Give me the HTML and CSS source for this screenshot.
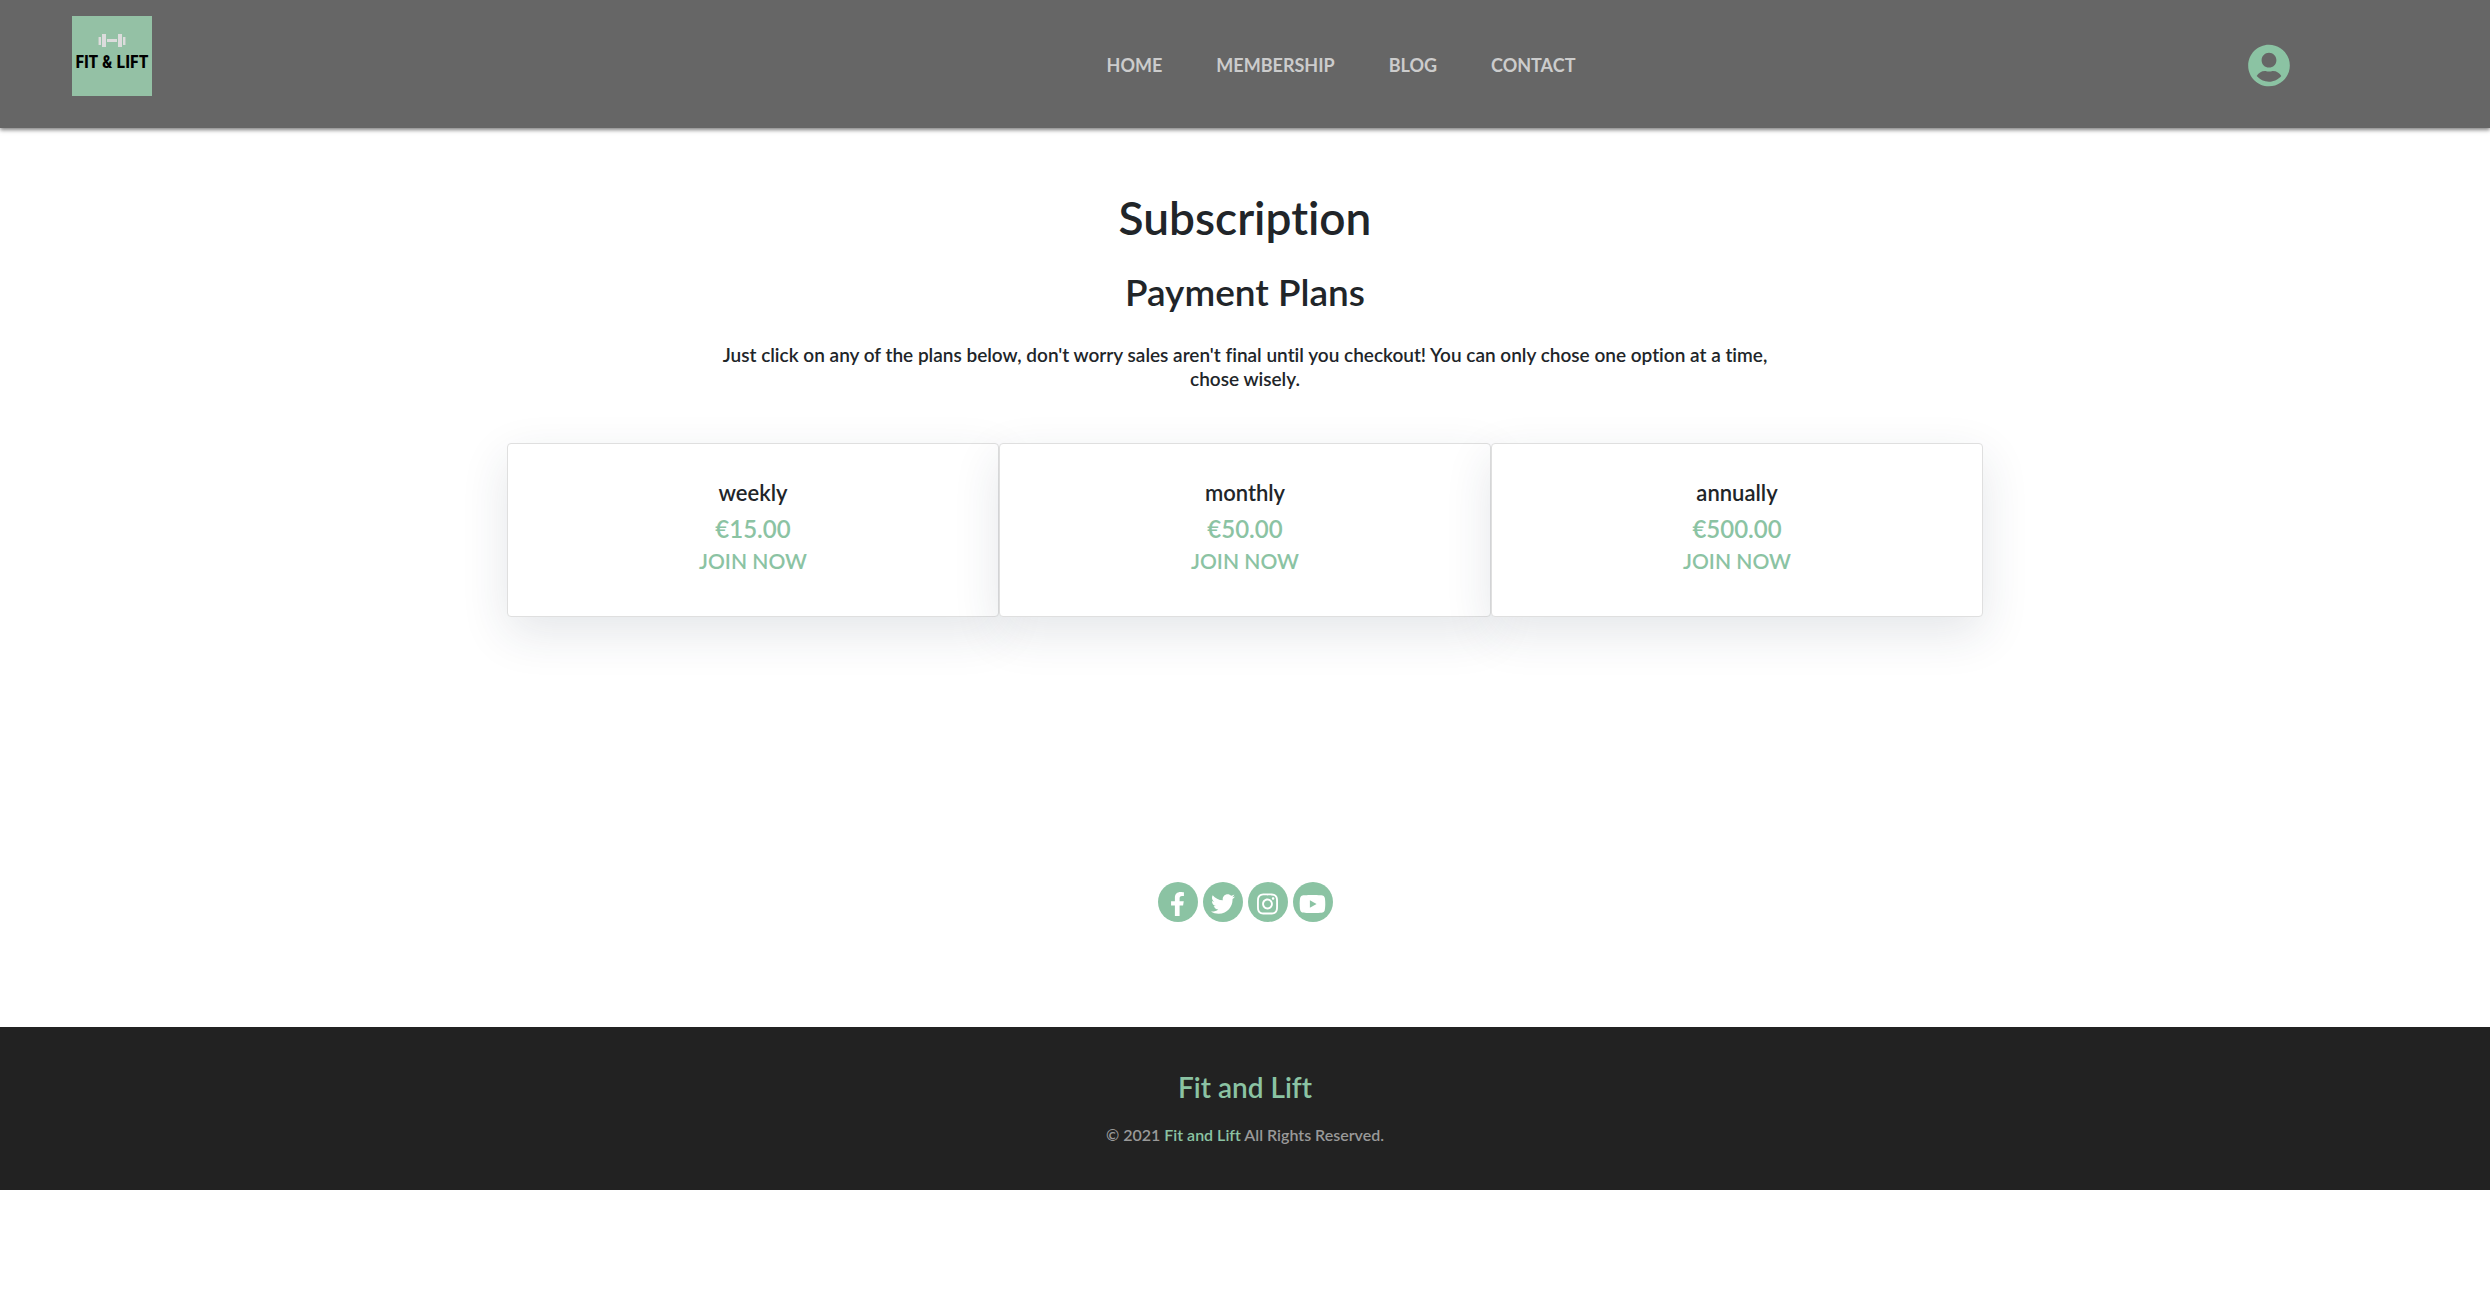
FILE: index.html
```
<!DOCTYPE html>
<html lang="en">
<head>
  <meta charset="utf-8">
  <meta name="viewport" content="width=device-width, initial-scale=1">
  <title>Fit and Lift - Subscription</title>
  <link rel="stylesheet" href="styles.css">
</head>
<body>
  <header class="site-header">
    <a class="logo" href="#">
      <svg class="logo-mark" viewBox="0 0 28 14" aria-hidden="true">
        <path fill="#b5cbbd" d="M0 3h3v8H0zM25 3h3v8h-3z"/>
        <path fill="#dcdcdc" d="M1 3h2v8H1zM25 3h2v8h-2zM4 0h4v13H4zM20 0h4v13h-4zM9 5h10v3H9z"/>
      </svg>
      <span class="logo-text">FIT &amp; LIFT</span>
    </a>
    <nav class="main-nav" aria-label="Main">
      <a href="#">HOME</a>
      <a href="#">MEMBERSHIP</a>
      <a href="#">BLOG</a>
      <a href="#">CONTACT</a>
    </nav>
    <a class="account" href="#" aria-label="Account">
      <svg viewBox="0 0 496 512" aria-hidden="true"><path d="M248 8C111 8 0 119 0 256s111 248 248 248 248-111 248-248S385 8 248 8zm0 96c48.6 0 88 39.4 88 88s-39.4 88-88 88-88-39.4-88-88 39.4-88 88-88zm0 344c-58.7 0-111.3-26.6-146.5-68.2 18.8-35.4 55.6-59.8 98.5-59.8 2.4 0 4.8.4 7.1 1.1 13 4.2 26.6 6.9 40.9 6.9 14.3 0 28-2.7 40.9-6.9 2.3-.7 4.7-1.1 7.1-1.1 42.9 0 79.7 24.4 98.5 59.8C359.3 421.4 306.7 448 248 448z"/></svg>
    </a>
  </header>

  <main class="subscription">
    <h1>Subscription</h1>
    <h2>Payment Plans</h2>
    <p class="intro">Just click on any of the plans below, don't worry sales aren't final until you checkout! You can only chose one option at a time, chose wisely.</p>
    <div class="plans">
      <section class="plan">
        <h3>weekly</h3>
        <p class="price">€15.00</p>
        <a class="join" href="#">JOIN NOW</a>
      </section>
      <section class="plan">
        <h3>monthly</h3>
        <p class="price">€50.00</p>
        <a class="join" href="#">JOIN NOW</a>
      </section>
      <section class="plan">
        <h3>annually</h3>
        <p class="price">€500.00</p>
        <a class="join" href="#">JOIN NOW</a>
      </section>
    </div>
  </main>

  <div class="social">
    <a href="#" aria-label="Facebook"><svg viewBox="0 0 320 512" aria-hidden="true"><path d="M279.14 288l14.22-92.66h-88.91v-60.13c0-25.35 12.42-50.06 52.24-50.06h40.42V6.26S260.43 0 225.36 0c-73.22 0-121.08 44.38-121.08 124.72v70.62H22.89V288h81.39v224h100.17V288z"/></svg></a>
    <a href="#" aria-label="Twitter"><svg viewBox="0 0 512 512" aria-hidden="true"><path d="M459.37 151.716c.325 4.548.325 9.097.325 13.645 0 138.72-105.583 298.558-298.558 298.558-59.452 0-114.68-17.219-161.137-47.106 8.447.974 16.568 1.299 25.34 1.299 49.055 0 94.213-16.568 130.274-44.832-46.132-.975-84.792-31.188-98.112-72.772 6.498.974 12.995 1.624 19.818 1.624 9.421 0 18.843-1.3 27.614-3.573-48.081-9.747-84.143-51.98-84.143-102.985v-1.299c13.969 7.797 30.214 12.67 47.431 13.319-28.264-18.843-46.781-51.005-46.781-87.391 0-19.492 5.197-37.36 14.294-52.954 51.655 63.675 129.3 105.258 216.365 109.807-1.624-7.797-2.599-15.918-2.599-24.04 0-57.828 46.782-104.934 104.934-104.934 30.213 0 57.502 12.67 76.67 33.137 23.715-4.548 46.456-13.32 66.599-25.34-7.798 24.366-24.366 44.833-46.132 57.827 21.117-2.273 41.584-8.122 60.426-16.243-14.292 20.791-32.161 39.308-52.628 54.253z"/></svg></a>
    <a href="#" aria-label="Instagram"><svg viewBox="0 0 448 512" aria-hidden="true"><path d="M224.1 141c-63.6 0-114.9 51.3-114.9 114.9s51.3 114.9 114.9 114.9S339 319.5 339 255.9 287.7 141 224.1 141zm0 189.6c-41.1 0-74.7-33.5-74.7-74.7s33.5-74.7 74.7-74.7 74.7 33.5 74.7 74.7-33.6 74.7-74.7 74.7zm146.4-194.3c0 14.9-12 26.8-26.8 26.8-14.9 0-26.8-12-26.8-26.8s12-26.8 26.8-26.8 26.8 12 26.8 26.8zm76.1 27.2c-1.7-35.9-9.9-67.7-36.2-93.9-26.2-26.2-58-34.4-93.9-36.2-37-2.1-147.9-2.1-184.9 0-35.8 1.7-67.6 9.9-93.9 36.1s-34.4 58-36.2 93.9c-2.1 37-2.1 147.9 0 184.9 1.7 35.9 9.9 67.7 36.2 93.9s58 34.4 93.9 36.2c37 2.1 147.9 2.1 184.9 0 35.9-1.7 67.7-9.9 93.9-36.2 26.2-26.2 34.4-58 36.2-93.9 2.1-37 2.1-147.8 0-184.8zM398.8 388c-7.8 19.6-22.9 34.7-42.6 42.6-29.5 11.7-99.5 9-132.1 9s-102.7 2.6-132.1-9c-19.6-7.8-34.7-22.9-42.6-42.6-11.7-29.5-9-99.5-9-132.1s-2.6-102.7 9-132.1c7.8-19.6 22.9-34.7 42.6-42.6 29.5-11.7 99.5-9 132.1-9s102.7-2.6 132.1 9c19.6 7.8 34.7 22.9 42.6 42.6 11.7 29.5 9 99.5 9 132.1s2.7 102.7-9 132.1z"/></svg></a>
    <a href="#" aria-label="YouTube"><svg viewBox="0 0 576 512" aria-hidden="true"><path d="M549.655 124.083c-6.281-23.65-24.787-42.276-48.284-48.597C458.781 64 288 64 288 64S117.22 64 74.629 75.486c-23.497 6.322-42.003 24.947-48.284 48.597-11.412 42.867-11.412 132.305-11.412 132.305s0 89.438 11.412 132.305c6.281 23.65 24.787 41.5 48.284 47.821C117.22 448 288 448 288 448s170.78 0 213.371-11.486c23.497-6.321 42.003-24.171 48.284-47.821 11.412-42.867 11.412-132.305 11.412-132.305s0-89.438-11.412-132.305zm-317.51 213.508V175.185l142.739 81.205-142.739 81.201z"/></svg></a>
  </div>

  <footer class="site-footer">
    <h2>Fit and Lift</h2>
    <p>© 2021 <a href="#">Fit and Lift</a> All Rights Reserved.</p>
  </footer>
</body>
</html>
```
FILE: styles.css
```
* {
  box-sizing: border-box;
}

body {
  margin: 0;
  background: #fff;
  color: #212529;
  font-family: Lato, "Noto Sans", sans-serif;
  font-weight: 600;
  font-variant-ligatures: no-common-ligatures;
}

h1, h2, h3, p {
  margin: 0;
  font-weight: 600;
}

a {
  color: #8bc3a3;
  text-decoration: none;
}

/* Header */
.site-header {
  display: flex;
  align-items: center;
  padding: 16px 200px 32px 72px;
  background: #666;
  box-shadow: 0 2px 4px rgba(0, 0, 0, 0.5);
}

.logo {
  display: flex;
  flex-direction: column;
  align-items: center;
  width: 80px;
  height: 80px;
  padding-top: 18px;
  background: #94c1a5;
  color: #000;
}

.logo-mark {
  width: 28px;
  height: 14px;
}

.logo-text {
  font: 700 18px/28px "Liberation Sans Narrow", "Roboto Condensed", Roboto, sans-serif;
  white-space: nowrap;
}

.main-nav {
  display: flex;
  flex: 1;
  justify-content: center;
  gap: 54px;
  margin-left: 282px;
  padding-top: 18px;
}

.main-nav a {
  color: #ccc;
  font-size: 18px;
  font-weight: 700;
  line-height: 24px;
}

.account {
  padding-top: 18px;
}

.account svg {
  display: block;
  width: 42px;
  height: 43px;
  fill: #8bc3a3;
}

/* Plans */
.subscription {
  padding: 62px 16px 0;
  text-align: center;
}

.subscription h1 {
  font-size: 46px;
  line-height: 56px;
}

.subscription h2 {
  margin-top: 24px;
  font-size: 37px;
  line-height: 44px;
}

.intro {
  max-width: 1080px;
  margin: 29px auto 0;
  font-size: 19px;
  line-height: 24px;
}

.plans {
  display: grid;
  grid-template-columns: repeat(3, 1fr);
  max-width: 1476px;
  margin: 52px auto 0;
}

.plan {
  padding: 33px 16px 39px;
  border: 1px solid #dfdfdf;
  border-radius: 4px;
  background: #fff;
  box-shadow: 0 16px 48px rgba(33, 47, 72, 0.12);
}

.plan h3 {
  margin-bottom: 4px;
  font-size: 22px;
  line-height: 32px;
}

.price {
  color: #8bc3a3;
  font-size: 24px;
  line-height: 32px;
}

.join {
  display: block;
  font-size: 21px;
  line-height: 32px;
}

/* Social links */
.social {
  display: flex;
  justify-content: center;
  gap: 5px;
  padding: 265px 16px 105px;
}

.social a {
  display: flex;
  align-items: center;
  justify-content: center;
  width: 40px;
  height: 40px;
  padding-top: 4px;
  border-radius: 50%;
  background: #8bc3a3;
}

.social svg {
  height: 24px;
  fill: #fff;
}

/* Footer */
.site-footer {
  padding: 44px 16px 43px;
  background: #222;
  text-align: center;
}

.site-footer h2 {
  color: #8bc3a3;
  font-size: 28px;
  line-height: 32px;
}

.site-footer p {
  margin-top: 20px;
  color: #999;
  font-size: 16px;
  line-height: 24px;
}
```
